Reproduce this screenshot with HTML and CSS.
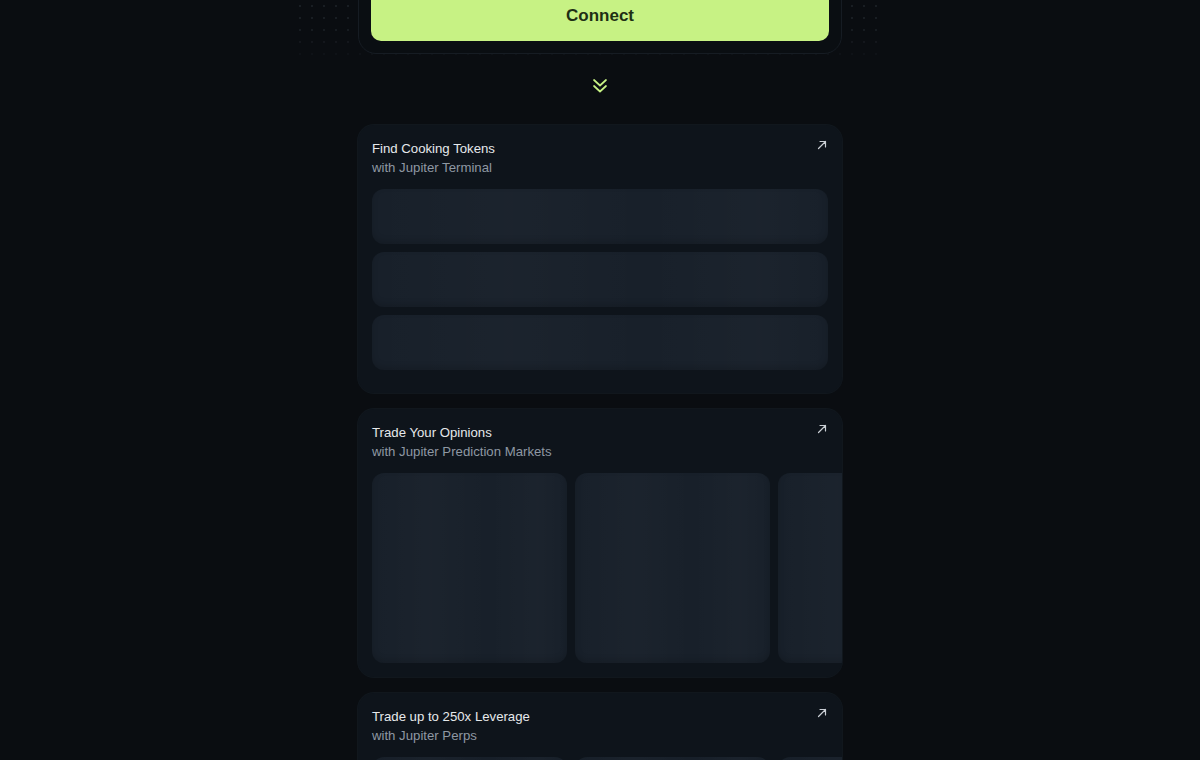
FILE: index.html
```html
<!DOCTYPE html>
<html lang="en">
<head>
<meta charset="utf-8">
<title>Jupiter</title>
<link rel="stylesheet" href="styles.css">
</head>
<body>
<main class="page">
  <section class="hero">
    <div class="dot-grid" aria-hidden="true"></div>
    <div class="connect-card">
      <button class="connect-btn" type="button">Connect</button>
    </div>
  </section>

  <div class="scroll-hint" aria-hidden="true">
    <svg width="16" height="16" viewBox="0 0 16 16" fill="none" stroke="#c7f284" stroke-width="1.7" stroke-linecap="round" stroke-linejoin="round">
      <path d="M2 2 8 7.5 14 2"/>
      <path d="M2 8 8 13.5 14 8"/>
    </svg>
  </div>

  <section class="promo">
    <header class="promo-head">
      <div>
        <h2 class="promo-title">Find Cooking Tokens</h2>
        <p class="promo-sub">with Jupiter Terminal</p>
      </div>
      <svg class="ext" width="12" height="12" viewBox="0 0 12 12" fill="none" stroke="#c9ced4" stroke-width="1.2" stroke-linecap="round"><path d="M2.5 9.5 9.5 2.5M4 2.5h5.5V8"/></svg>
    </header>
    <div class="row-list">
      <div class="skeleton row"></div>
      <div class="skeleton row"></div>
      <div class="skeleton row"></div>
    </div>
  </section>

  <section class="promo">
    <header class="promo-head">
      <div>
        <h2 class="promo-title">Trade Your Opinions</h2>
        <p class="promo-sub">with Jupiter Prediction Markets</p>
      </div>
      <svg class="ext" width="12" height="12" viewBox="0 0 12 12" fill="none" stroke="#c9ced4" stroke-width="1.2" stroke-linecap="round"><path d="M2.5 9.5 9.5 2.5M4 2.5h5.5V8"/></svg>
    </header>
    <div class="tile-strip">
      <div class="skeleton tile"></div>
      <div class="skeleton tile"></div>
      <div class="skeleton tile"></div>
    </div>
  </section>

  <section class="promo">
    <header class="promo-head">
      <div>
        <h2 class="promo-title">Trade up to 250x Leverage</h2>
        <p class="promo-sub">with Jupiter Perps</p>
      </div>
      <svg class="ext" width="12" height="12" viewBox="0 0 12 12" fill="none" stroke="#c9ced4" stroke-width="1.2" stroke-linecap="round"><path d="M2.5 9.5 9.5 2.5M4 2.5h5.5V8"/></svg>
    </header>
    <div class="tile-strip">
      <div class="skeleton tile"></div>
      <div class="skeleton tile"></div>
      <div class="skeleton tile"></div>
    </div>
  </section>
</main>
</body>
</html>
```

FILE: styles.css
```css
* { box-sizing: border-box; }

html, body {
  margin: 0;
  background: #0a0d11;
  font-family: "Liberation Sans", Arial, sans-serif;
  overflow: hidden;
}

.page {
  width: 484px;
  margin: 0 auto;
  display: flex;
  flex-direction: column;
}

/* top: connect card over a faint dotted field */
.hero {
  position: relative;
  margin-top: -26px;
}

.dot-grid {
  position: absolute;
  left: -66px;
  right: -40px;
  top: 0;
  height: 94px;
  background-image: radial-gradient(circle, rgba(120, 135, 150, 0.14) 1px, transparent 1.4px);
  background-size: 12px 12px;
  background-position: 2px 2px;
  -webkit-mask-image: linear-gradient(to bottom, #000 55%, transparent 100%);
  mask-image: linear-gradient(to bottom, #000 55%, transparent 100%);
  pointer-events: none;
}

.connect-card {
  position: relative;
  padding: 12px;
  border-radius: 18px;
  background: #0a0e12;
  border: 1px solid #161c23;
}

.connect-btn {
  display: block;
  width: 100%;
  height: 54px;
  border: 0;
  border-radius: 10px;
  background: #c7f284;
  color: #1e2f14;
  font-family: "Liberation Sans", Arial, sans-serif;
  font-weight: 700;
  font-size: 17px;
  padding-top: 4px;
}

.scroll-hint {
  display: flex;
  justify-content: center;
  padding: 24px 0 29px;
  height: 71px;
}

/* promo cards */
.promo {
  background: #0e141b;
  border-radius: 16px;
  padding: 14px 14px 14px;
  margin-bottom: 16px;
  overflow: hidden;
  box-shadow: 0 0 0 1px rgba(22, 30, 38, 0.6);
}

.promo-head {
  display: flex;
  justify-content: space-between;
  align-items: flex-start;
  margin-bottom: 12px;
}

.promo-title {
  margin: 0;
  font-size: 13.2px;
  font-weight: 400;
  line-height: 19px;
  color: #e6e9ec;
}

.promo-sub {
  margin: 0;
  font-size: 13.2px;
  line-height: 19px;
  color: #8e98a3;
}

.skeleton {
  border-radius: 12px;
  background:
    linear-gradient(90deg,
      rgba(255, 255, 255, 0.00) 0%,
      rgba(255, 255, 255, 0.015) 30%,
      rgba(255, 255, 255, 0.00) 60%,
      rgba(255, 255, 255, 0.015) 85%,
      rgba(255, 255, 255, 0.00) 100%),
    #18202a;
  box-shadow: inset 0 -3px 6px rgba(0, 0, 0, 0.15);
}

.row-list {
  display: flex;
  flex-direction: column;
  gap: 8px;
  padding-bottom: 9px;
}

.row {
  height: 55px;
}

.tile-strip {
  display: flex;
  gap: 8px;
  margin-right: -14px;
}

.tile {
  flex: 0 0 195px;
  height: 190px;
}
```
